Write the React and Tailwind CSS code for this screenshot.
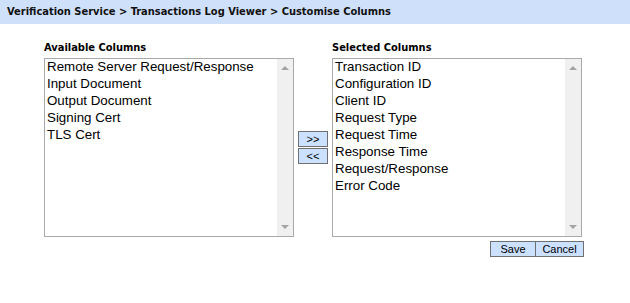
const available = ['Remote Server Request/Response', 'Input Document', 'Output Document', 'Signing Cert', 'TLS Cert'];
const selected = [
  'Transaction ID',
  'Configuration ID',
  'Client ID',
  'Request Type',
  'Request Time',
  'Response Time',
  'Request/Response',
  'Error Code',
];

function ListBox({ items }) {
  return (
    <div className="flex h-[179px] w-[250px] border border-[#a9a9a9] bg-white">
      <ul className="-mt-[1px] flex-1 font-['Liberation_Sans',Arial,sans-serif] text-[13.33px] leading-[17px] text-black">
        {items.map((item) => (
          <li key={item} className="whitespace-nowrap pl-[2px]">
            {item}
          </li>
        ))}
      </ul>
      <div className="flex w-[16px] flex-col items-center justify-between bg-[#f0f0f0] py-[7px]">
        <svg width="8" height="4" viewBox="0 0 8 4">
          <path d="M0 4 L4 0 L8 4 Z" fill="#a3a3a3" />
        </svg>
        <svg width="8" height="4" viewBox="0 0 8 4">
          <path d="M0 0 L8 0 L4 4 Z" fill="#a3a3a3" />
        </svg>
      </div>
    </div>
  );
}

function SmallButton({ children, className = '' }) {
  return (
    <button
      type="button"
      className={`flex h-[16px] items-center justify-center border border-[#707070] bg-[#cce0ff] font-['Liberation_Sans',Arial,sans-serif] text-[11px] leading-none text-black ${className}`}
    >
      {children}
    </button>
  );
}

export default function App() {
  return (
    <div className="h-[303px] w-[630px] bg-white">
      <div className="flex h-[24px] items-center bg-[#cfe0fb] px-[7px] font-['DejaVu_Sans_Condensed','DejaVu_Sans',sans-serif] text-[11px] font-bold text-[#111]">
        Verification Service &gt; Transactions Log Viewer &gt; Customise Columns
      </div>

      <div className="flex pl-[44px] pt-[17px]">
        <div>
          <div className="mb-[3px] h-[14px] font-['DejaVu_Sans_Condensed','DejaVu_Sans',sans-serif] text-[11px] font-bold leading-[14px] text-black">
            Available Columns
          </div>
          <ListBox items={available} />
        </div>

        <div className="flex w-[38px] flex-col items-center pt-[90px]">
          <SmallButton className="w-[30px]">&gt;&gt;</SmallButton>
          <SmallButton className="mt-px w-[30px]">&lt;&lt;</SmallButton>
        </div>

        <div>
          <div className="mb-[3px] h-[14px] font-['DejaVu_Sans_Condensed','DejaVu_Sans',sans-serif] text-[11px] font-bold leading-[14px] text-black">
            Selected Columns
          </div>
          <ListBox items={selected} />
          <div className="mr-[-2px] mt-[4px] flex justify-end">
            <SmallButton className="w-[46px]">Save</SmallButton>
            <SmallButton className="w-[48px] border-l-0">Cancel</SmallButton>
          </div>
        </div>
      </div>
    </div>
  );
}
